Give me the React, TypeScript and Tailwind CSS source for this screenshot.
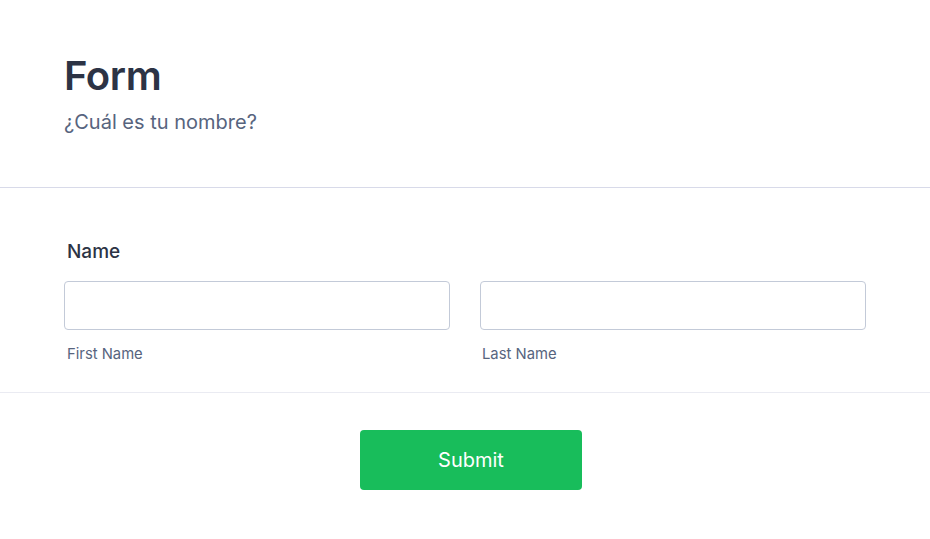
export default function App() {
  return (
    <div className="w-[930px] h-[539px] bg-white" style={{ fontFamily: "Inter, 'Noto Sans', sans-serif" }}>
      <div className="px-[64px] pt-[52px] h-[188px] border-b border-[#d8dae9]">
        <h1 className="text-[40px] leading-[48px] font-semibold text-[#2c3345] tracking-[-0.4px]">Form</h1>
        <p className="text-[20px] leading-[26px] text-[#57647e] mt-[9px]">¿Cuál es tu nombre?</p>
      </div>
      <div className="px-[64px] pt-[52px] h-[205px] border-b border-[#eaebf2]">
        <label className="block pl-[3px] text-[19px] leading-[24px] font-medium text-[#2c3345]">Name</label>
        <div className="flex gap-[30px] mt-[17px]">
          <div className="w-[386px]">
            <input className="w-full h-[49px] border border-[#c3cad8] rounded-[4px] bg-white" />
            <div className="pl-[3px] mt-[15px] text-[14.8px] leading-[18px] text-[#57647e]">First Name</div>
          </div>
          <div className="w-[386px]">
            <input className="w-full h-[49px] border border-[#c3cad8] rounded-[4px] bg-white" />
            <div className="pl-[2px] mt-[15px] text-[14.8px] leading-[18px] text-[#57647e]">Last Name</div>
          </div>
        </div>
      </div>
      <div className="flex justify-center pt-[37px] pl-[12px]">
        <button className="w-[222px] h-[60px] rounded-[4px] bg-[#18bd5b] text-white text-[20px]">Submit</button>
      </div>
    </div>
  );
}
